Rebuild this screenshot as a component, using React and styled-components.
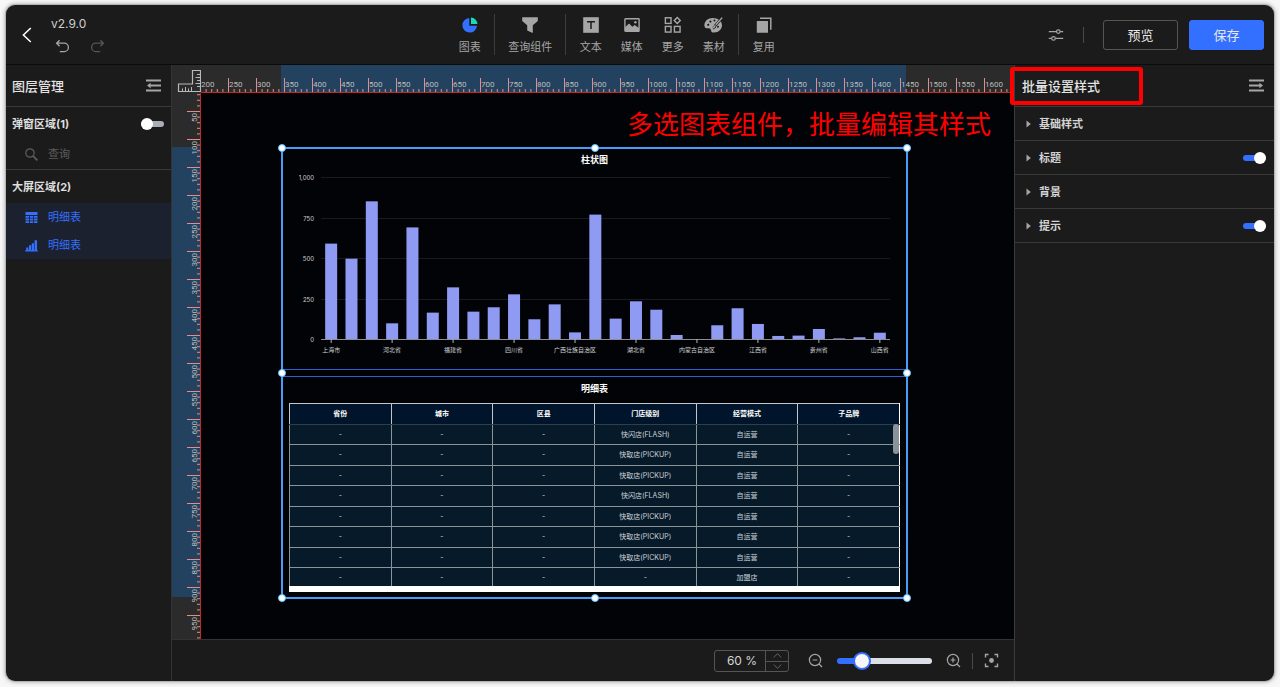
import React from "react";
import styled, { createGlobalStyle, css } from "styled-components";

const GlobalStyle = createGlobalStyle`
  *, *::before, *::after { box-sizing: border-box; }
  body {
    margin: 0;
    background: #f7f7f7;
    font-family: Inter, "Noto Sans CJK SC", sans-serif;
    color: #d6d6d6;
    font-size: 11px;
    line-height: 16px;
  }
  button, input { font: inherit; color: inherit; margin: 0; }
  button { padding: 0; border: 0; background: none; cursor: pointer; }
  h2, h3, p { margin: 0; padding: 0; font-weight: inherit; font-size: inherit; }
  svg { display: block; }
`;

const Page = styled.div`
  min-height: 100vh;
  padding: 5px 6px 6px;
  display: flex;
`;

const Window = styled.div`
  flex: 1;
  min-width: 0;
  display: flex;
  flex-direction: column;
  overflow: hidden;
  border-radius: 9px;
  background: #1b1b1b;
  box-shadow: 0 0 0 1px #b4b4b4, 0 0 4px 1px #a8a8a8;
`;

/* ---------- Header ---------- */

const Header = styled.header`
  height: 60px;
  padding-left: 2px;
  display: grid;
  grid-template-columns: 9fr auto 10fr;
  align-items: center;
  border-bottom: 1px solid #0b0b0b;
`;

const HeaderStart = styled.div`
  display: flex;
  align-items: center;
  gap: 13px;
  padding-left: 11px;
`;

const BackButton = styled.button`
  width: 16px;
  height: 20px;
  display: grid;
  place-items: center;
  color: #fff;
`;

const VersionBlock = styled.div`
  display: flex;
  flex-direction: column;
  gap: 7px;
  padding: 0 3px;
`;

const Version = styled.span`
  font: 12px/16px Inter, sans-serif;
  color: #cfcfcf;
`;

const History = styled.div`
  display: flex;
  gap: 20px;
  padding-left: 4px;
`;

const IconButton = styled.button`
  display: grid;
  place-items: center;
  color: ${(p) => p.$color || "#a6a6a6"};
`;

const Tools = styled.nav`
  display: flex;
  align-items: center;
`;

const ToolGroup = styled.div`
  display: flex;
  padding: 0 4px;
  & + & { border-left: 1px solid #3c3c3c; }
`;

const Tool = styled.button`
  min-width: 41px;
  padding: 3px 9px 0;
  display: flex;
  flex-direction: column;
  align-items: center;
  gap: 6px;
  font-size: 11px;
  line-height: 16px;
  color: #a6a6a6;
  white-space: nowrap;
`;

const HeaderEnd = styled.div`
  display: flex;
  align-items: center;
  justify-content: flex-end;
  padding-right: 10px;
  gap: 11px;
`;

const Divider = styled.span`
  width: 1px;
  height: 16px;
  margin: ${(p) => p.$margin || "0"};
  background: #4a4a4a;
`;

const ActionButton = styled.button`
  width: 75px;
  height: 30px;
  border-radius: 3px;
  font-size: 13px;
  color: #e8e8e8;
  border: 1px solid ${(p) => (p.$primary ? "#3370ff" : "#555")};
  background: ${(p) => (p.$primary ? "#3370ff" : "transparent")};
`;

/* ---------- Body ---------- */

const Body = styled.div`
  flex: 1;
  min-height: 0;
  display: grid;
  grid-template-columns: 166px minmax(0, 1fr) 260px;
`;

const LayerPanel = styled.aside`
  border-right: 1px solid #333;
`;

const StylePanel = styled.aside`
  position: relative;
  border-left: 1px solid #3c3c3c;
`;

const PanelHeader = styled.div`
  height: 42px;
  display: flex;
  align-items: center;
  justify-content: space-between;
  padding: ${(p) => p.$padding};
  border-bottom: 1px solid #3a3a3a;
`;

const PanelTitle = styled.h2`
  font-size: 13px;
  line-height: 20px;
  font-weight: 500;
  color: #e4e4e4;
`;

const LayerSection = styled.section`
  & + & { border-top: 1px solid #3a3a3a; }
  &:first-of-type { padding-bottom: 1px; }
`;

const LayerHeading = styled.div`
  height: 33px;
  display: flex;
  align-items: center;
  justify-content: space-between;
  padding: 0 7px 0 6px;
`;

const LayerTitle = styled.h3`
  font-size: 11px;
  font-weight: 700;
  color: #dedede;
`;

const Layer = styled.button`
  width: 100%;
  height: 28px;
  display: flex;
  align-items: center;
  gap: 10px;
  padding: 0 19px;
  color: ${(p) => (p.$selected ? "#3370ff" : "#5c5c5c")};
  background: ${(p) => (p.$selected ? "#1c2130" : "transparent")};
`;

const Toggle = styled.input.attrs({ type: "checkbox", role: "switch" })`
  appearance: none;
  position: relative;
  width: 23px;
  height: 12px;
  &::before {
    content: "";
    position: absolute;
    inset: 3px 0;
    border-radius: 3px;
    background: #a9adb5;
  }
  &::after {
    content: "";
    position: absolute;
    top: 0;
    left: 0;
    width: 12px;
    height: 12px;
    border-radius: 50%;
    background: #fff;
  }
  &:checked::before { background: #3370ff; }
  &:checked::after { left: 11px; }
`;

const StyleRow = styled.div`
  height: 34px;
  display: flex;
  align-items: center;
  padding: 0 8px 0 11px;
  border-bottom: 1px solid #3a3a3a;
`;

const Expander = styled.button`
  flex: 1;
  display: flex;
  align-items: center;
  gap: 8px;
  text-align: left;
  font-weight: 700;
  color: #d4d4d4;
`;

const TitleMarker = styled.div`
  position: absolute;
  z-index: 3;
  left: -5px;
  top: 2px;
  width: 133px;
  height: 38px;
  border: 4px solid #f00;
  border-radius: 3px;
  pointer-events: none;
`;

/* ---------- Stage ---------- */

const Stage = styled.main`
  display: grid;
  grid-template-columns: 29px minmax(0, 1fr);
  grid-template-rows: 28px minmax(0, 1fr) 42px;
`;

const RulerCorner = styled.div`
  display: flex;
  justify-content: flex-end;
  align-items: flex-end;
  background: #2b2b2b;
`;

const Ruler = styled.div`
  overflow: hidden;
  background: #2b2b2b;
  min-height: 0;
  ${(p) => p.$vertical
    ? css`border-right: 1px solid #c02a2a; contain: size;`
    : css`border-bottom: 1px solid #c02a2a;`}
  text { font: 8px Roboto, sans-serif; fill: #bdbdbd; }
`;

const Canvas = styled.div`
  position: relative;
  overflow: hidden;
  background: #020307;
`;

const Annotation = styled.p`
  position: absolute;
  top: 12px;
  left: 426px;
  font-size: 26px;
  line-height: 40px;
  white-space: nowrap;
  color: #f00;
`;

const Selection = styled.div`
  position: absolute;
  left: 80px;
  top: 54px;
  width: 627px;
  height: 452px;
  border: 2px solid #4b9bf8;
  display: flex;
  flex-direction: column;
  gap: 6px;
`;

const HandleLayer = styled.div`
  position: absolute;
  inset: -1px;
  pointer-events: none;
`;

const Handle = styled.span`
  position: absolute;
  left: ${(p) => p.$x};
  top: ${(p) => p.$y};
  width: 8px;
  height: 8px;
  margin: -4px;
  border: 1px solid #5cc0ff;
  border-radius: 50%;
  background: #fff;
`;

const ChartWidget = styled.section`
  height: 221px;
  border-bottom: 1px solid #2f5fd0;
  svg text { font: 6px Inter, "Noto Sans CJK SC", sans-serif; fill: #d2d2d2; }
`;

const TableWidget = styled.section`
  flex: 1;
  border-top: 1px solid #2f5fd0;
  padding: 0 6px;
`;

const WidgetTitle = styled.h3`
  font-size: 9px;
  line-height: ${(p) => p.$line};
  font-weight: 700;
  text-align: center;
  color: #fff;
`;

const TableFrame = styled.div`
  position: relative;
  margin-top: 2px;
  padding-bottom: 6px;
  background: #fff;
`;

const TableViewport = styled.div`
  height: 183px;
  overflow: hidden;
`;

const DataTable = styled.table`
  width: 100%;
  table-layout: fixed;
  border-collapse: collapse;
  background: #061a2a;
  font-size: 7px;
  line-height: 10px;
  text-align: center;
  color: #ccd3d8;
  th, td { padding: 0; }
  thead tr, tbody tr:nth-child(even) { height: 21px; }
  tbody tr { height: 20px; }
  th {
    font-weight: 700;
    color: #fff;
    background: #00152b;
    border: 1px solid #c4c6ca;
    border-bottom-color: #2e3f4c;
  }
  td { border: 1px solid #8b9599; }
  tr > :last-child { border-right-color: #fff; }
  tbody tr:first-child td { border-top-color: #2e3f4c; }
`;

const ScrollThumb = styled.span`
  position: absolute;
  top: 21px;
  right: 1px;
  width: 6px;
  height: 30px;
  border-radius: 3px;
  background: #8b939a;
`;

/* ---------- Footer ---------- */

const Footer = styled.footer`
  grid-column: 1 / -1;
  display: flex;
  align-items: center;
  justify-content: flex-end;
  padding-right: 15px;
  border-top: 1px solid #333;
`;

const ZoomField = styled.div`
  width: 75px;
  height: 22px;
  display: flex;
  border: 1px solid #555;
  border-radius: 3px;
`;

const ZoomInput = styled.input`
  flex: 1;
  min-width: 0;
  padding: 0 0 0 4px;
  border: 0;
  background: none;
  text-align: center;
  font-size: 12px;
`;

const Stepper = styled.div`
  width: 23px;
  display: grid;
  grid-template-rows: 1fr 1fr;
  border-left: 1px solid #555;
  button { display: grid; place-items: center; color: #666; }
  button + button { border-top: 1px solid #555; }
`;

const ZoomTools = styled.div`
  display: flex;
  align-items: center;
  gap: 14px;
  padding-left: 19px;
`;

const ZoomSlider = styled.input.attrs({ type: "range" })`
  appearance: none;
  width: 95px;
  height: 18px;
  background: transparent;
  &::-webkit-slider-runnable-track {
    height: 6px;
    border-radius: 3px;
    background: linear-gradient(90deg, #3370ff 26%, #dcdfe6 26%);
  }
  &::-webkit-slider-thumb {
    appearance: none;
    width: 18px;
    height: 18px;
    margin-top: -6px;
    border: 2px solid #3370ff;
    border-radius: 50%;
    background: #f7f7f7;
  }
`;

/* ---------- Icons ---------- */

const Icon = ({ size = 16, box = 16, children, ...rest }) => (
  <svg width={size} height={size} viewBox={`0 0 ${box} ${box}`} fill="none" aria-hidden="true" {...rest}>
    {children}
  </svg>
);

const UndoIcon = ({ flip }) => (
  <svg width="15" height="15" viewBox="0 0 15 15" fill="none" stroke="currentColor" strokeWidth="1.3" aria-hidden="true">
    <g transform={flip ? "translate(15 0) scale(-1 1)" : undefined}>
      <path d="M4.6 1.2 1.6 4.2l3 3M1.8 4.2h7.4a4.1 4.1 0 0 1 0 8.4H4.8" />
    </g>
  </svg>
);

const PieIcon = () => (
  <Icon>
    <path d="M7.3 1A7.3 7.3 0 1 0 15 8.7H7.3Z" fill="#3370ff" />
    <path d="M9 .6V7h6.4A6.6 6.6 0 0 0 9 .6Z" fill="#14dcb4" />
  </Icon>
);
const FunnelIcon = () => (
  <Icon><path d="M.2.2h15.600v3.800L10.8 8.200V16L5.2 13.400V8.200L.2 4Z" fill="currentColor" /></Icon>
);
const TextIcon = () => (
  <Icon>
    <rect x=".2" y=".2" width="15.6" height="15.6" fill="currentColor" />
    <path d="M4 4.8h8M8 4.8v7.2" stroke="#1b1b1b" strokeWidth="1.5" />
  </Icon>
);
const MediaIcon = () => (
  <Icon>
    <rect x=".9" y="1.7" width="14.2" height="12.6" rx=".6" stroke="currentColor" strokeWidth="1.4" />
    <path d="M1 10.2 5 6.4l3.4 3.4 2.2-1.8 4.4 3V14H1Z" fill="currentColor" />
    <circle cx="11.4" cy="5.2" r="1.2" fill="currentColor" />
  </Icon>
);
const MoreIcon = () => (
  <Icon size={16} box={17} stroke="currentColor" strokeWidth="1.5" overflow="visible">
    <rect x=".4" y=".8" width="6" height="6" />
    <rect x=".4" y="10" width="6" height="6" />
    <rect x="10" y="10" width="6" height="6" />
    <path d="m13 .6 3.200 3.200L13 7 9.800 3.800Z" />
  </Icon>
);
const PaletteIcon = () => (
  <svg width="19" height="16" viewBox="0 0 19 16" aria-hidden="true">
    <path
      d="M8.8 1C4 1 .4 4.200.4 8.200c0 2.600 1.600 3.200 3.800 3 1.800-.2 2.600.6 2.800 2 .2 1.600 1 2.400 3 2.300 4.800-.2 8-3.300 8-7.300C18 4 14 1 8.800 1Z"
      fill="currentColor"
    />
    <g fill="#1b1b1b">
      <circle cx="4.200" cy="7.800" r="1.100" />
      <circle cx="6.400" cy="4.600" r="1.100" />
      <circle cx="10.400" cy="3.600" r="1" />
      <circle cx="14" cy="9.800" r="1" />
    </g>
    <path d="M18.400.4 11.600 8.200c-.4 1.400-1.200 2.600-2.800 3" stroke="#1b1b1b" strokeWidth="2.600" fill="none" />
    <path d="M18.200.6 11.800 7.800M11.400 8.200c-.6 1.400-1.200 2.400-2.800 2.800" stroke="currentColor" strokeWidth="1.400" fill="none" />
  </svg>
);
const ReuseIcon = () => (
  <Icon>
    <rect x=".8" y="4" width="11.2" height="11.800" rx=".6" fill="currentColor" />
    <path d="M4 1.200h10.800v11.600" stroke="currentColor" strokeWidth="1.500" />
  </Icon>
);

const SettingsIcon = () => (
  <Icon stroke="currentColor" strokeWidth="1.200">
    <path d="M.8 4.600h7.600M12.200 4.600h3M.8 11.400h2.800M7.400 11.400h7.800" />
    <circle cx="10.300" cy="4.600" r="1.800" />
    <circle cx="5.500" cy="11.400" r="1.800" />
  </Icon>
);

const CollapseIcon = ({ flip }) => (
  <svg width="15" height="13" viewBox="0 0 15 13" aria-hidden="true">
    <g transform={flip ? "translate(15 0) scale(-1 1)" : undefined}>
      <path d="M0 1.500h15M4 6.500h11M0 11.500h15" stroke="currentColor" strokeWidth="1.800" />
      <path d="M4.600 3.800v5.400L1 6.500Z" fill="currentColor" />
    </g>
  </svg>
);

const SearchIcon = () => (
  <Icon size={13} box={13} stroke="currentColor">
    <circle cx="5" cy="5" r="4.200" strokeWidth="1.200" />
    <path d="m8.200 8.200 4.200 4.200" strokeWidth="1.800" />
  </Icon>
);
const GridIcon = () => (
  <Icon size={13} box={13} fill="currentColor">
    <path d="M.5 1h12v3H.5ZM.5 5h3.500v1.800H.5Zm4.300 0h3.400v1.800H4.800ZM9 5h3.500v1.800H9ZM.5 7.600H4v1.800H.5Zm4.300 0h3.400v1.800H4.800ZM9 7.600h3.500v1.800H9ZM.5 10.200H4V12H.5Zm4.300 0h3.400V12H4.800ZM9 10.200h3.500V12H9Z" />
  </Icon>
);
const BarsIcon = () => (
  <Icon size={13} box={13} fill="currentColor">
    <path d="M.2 11.200h12.600v1.200H.2ZM1.200 8.400h2.200v3H1.200ZM4 6.200h2.200v5.200H4ZM6.800 4.200H9v7.200H6.800ZM9.600 1.200H12v10.200H9.600Z" />
  </Icon>
);

const MagnifierIcon = ({ plus }) => (
  <Icon size={15} box={15} stroke="currentColor" strokeWidth="1.200">
    <circle cx="7" cy="7" r="5.600" />
    <path d="m11 11 3 3M4.600 7h4.800" />
    {plus && <path d="M7 4.600v4.800" />}
  </Icon>
);

const FitIcon = () => (
  <Icon size={15} box={15} stroke="currentColor" strokeWidth="1.400">
    <path d="M1.500 4.500v-3h3M10.500 1.500h3v3M13.500 10.500v3h-3M4.500 13.500h-3v-3" />
    <circle cx="7.500" cy="7.500" r="2.400" fill="currentColor" stroke="none" />
  </Icon>
);

const CornerRulerIcon = () => (
  <svg width="24" height="24" viewBox="0 0 24 24" fill="none" stroke="#b9b9b9" aria-hidden="true">
    <path d="M1.500 22.500v-7.500h14V1.500h8v21Z" strokeWidth="1.200" />
    <path d="M5.500 19.500v3M8.500 18v4.500M11.500 19.500v3M14.500 18v4.500M20 5.500h3M18.500 8.500H23M20 11.500h3M18.500 14.500H23M20 17.500h3" />
  </svg>
);

const Chevron = ({ down }) => (
  <svg width="9" height="5" viewBox="0 0 9 5" fill="none" stroke="currentColor" aria-hidden="true">
    <path d={down ? "M.8.6 4.500 4.300 8.200.6" : "M.8 4.400 4.500.7l3.700 3.700"} />
  </svg>
);

/* ---------- Rulers ---------- */

const STEP = 28;
const MINOR = [1, 2, 3, 4];

const HorizontalRuler = () => (
  <Ruler>
    <svg width="100%" height="27">
      <rect x="80" width="625" height="27" fill="#224260" />
      {Array.from({ length: 29 }, (_, i) => (
        <g key={i} transform={`translate(${i * STEP - 1} 0)`}>
          <rect y="13" width="1" height="14" fill="#e88a86" />
          {MINOR.map((m) => (
            <rect key={m} x={(m * STEP) / 5} y="24" width="1" height="3" fill="#e88a86" />
          ))}
          <text x="1" y="22">{200 + i * 50}</text>
        </g>
      ))}
    </svg>
  </Ruler>
);

const VerticalRuler = () => (
  <Ruler $vertical>
    <svg width="28" height="100%">
      <rect y="54" width="28" height="450" fill="#224260" />
      {Array.from({ length: 20 }, (_, i) => (
        <g key={i} transform={`translate(0 ${i * STEP - 10})`}>
          <rect x="15" width="13" height="1" fill="#e88a86" />
          {MINOR.map((m) => (
            <rect key={m} x="25" y={(m * STEP) / 5} width="3" height="1" fill="#e88a86" />
          ))}
          {i > 0 && (
            <text transform="translate(25 2) rotate(-90)" textAnchor="end">{i * 50}</text>
          )}
        </g>
      ))}
    </svg>
  </Ruler>
);

/* ---------- Data ---------- */

const toolGroups = [
  [["图表", PieIcon]],
  [["查询组件", FunnelIcon]],
  [["文本", TextIcon], ["媒体", MediaIcon], ["更多", MoreIcon], ["素材", PaletteIcon]],
  [["复用", ReuseIcon]],
];

const values = [
  595, 502, 856, 103, 695, 169, 325, 175, 202, 282, 128, 220, 47, 774,
  132, 239, 187, 31, 3, 91, 196, 99, 25, 27, 68, 10, 17, 45,
];
const provinces = [
  "上海市", "河北省", "福建省", "四川省", "广西壮族自治区",
  "湖北省", "内蒙古自治区", "江西省", "贵州省", "山西省",
];
const gridValues = [1000, 750, 500, 250];

const columns = ["省份", "城市", "区县", "门店级别", "经营模式", "子品牌"];
const FLASH = "快闪店(FLASH)";
const PICKUP = "快取店(PICKUP)";
const stores = [
  [FLASH, "自运营"], [PICKUP, "自运营"], [PICKUP, "自运营"], [FLASH, "自运营"],
  [PICKUP, "自运营"], [PICKUP, "自运营"], [PICKUP, "自运营"], ["-", "加盟店"],
];

const styleRows = [
  { label: "基础样式" },
  { label: "标题", toggle: true },
  { label: "背景" },
  { label: "提示", toggle: true },
];

const handles = [
  ["0%", "0%"], ["50%", "0%"], ["100%", "0%"], ["0%", "50%"],
  ["100%", "50%"], ["0%", "100%"], ["50%", "100%"], ["100%", "100%"],
];

const BASE = 168;
const LEFT = 38;
const PLOT = 569;
const SLOT = PLOT / values.length;
const scale = (v) => (v * 162) / 1000;

const BarChart = () => (
  <svg width="623" height="198" role="img" aria-label="柱状图">
    {gridValues.map((v) => (
      <g key={v}>
        <rect x={LEFT} y={Math.round(BASE - scale(v))} width={PLOT} height="1" fill="#191a1e" />
        <text x="31" y={BASE - scale(v) + 3} textAnchor="end">{v.toLocaleString("en-US")}</text>
      </g>
    ))}
    <text x="31" y={BASE + 3} textAnchor="end">0</text>
    {values.map((v, i) => (
      <rect key={i} x={LEFT + SLOT * (i + 0.5) - 6} y={BASE + 1 - scale(v)} width="12" height={scale(v)} fill="#8f9af3" />
    ))}
    <rect x={LEFT} y={BASE} width={PLOT} height="1" fill="#8d8d90" />
    {provinces.map((name, i) => {
      const x = LEFT + SLOT * (i * 3 + 0.5);
      return (
        <g key={name}>
          <rect x={x - 0.5} y={BASE} width="1" height="4" fill="#b5b5b5" />
          <text x={x} y={BASE + 13} textAnchor="middle">{name}</text>
        </g>
      );
    })}
  </svg>
);

export default function App() {
  return (
    <>
      <GlobalStyle />
      <Page>
        <Window>
          <Header>
            <HeaderStart>
              <BackButton aria-label="返回">
                <svg width="10" height="16" viewBox="0 0 10 16" fill="none" stroke="currentColor" strokeWidth="1.500" aria-hidden="true">
                  <path d="M8.800 1 1.400 8l7.400 7" />
                </svg>
              </BackButton>
              <VersionBlock>
                <Version>v2.9.0</Version>
                <History>
                  <IconButton aria-label="撤销"><UndoIcon /></IconButton>
                  <IconButton aria-label="重做" $color="#555"><UndoIcon flip /></IconButton>
                </History>
              </VersionBlock>
            </HeaderStart>
            <Tools>
              {toolGroups.map((group, i) => (
                <ToolGroup key={i}>
                  {group.map(([label, Glyph]) => (
                    <Tool key={label}><Glyph />{label}</Tool>
                  ))}
                </ToolGroup>
              ))}
            </Tools>
            <HeaderEnd>
              <IconButton aria-label="设置"><SettingsIcon /></IconButton>
              <Divider $margin="0 8px" />
              <ActionButton>预览</ActionButton>
              <ActionButton $primary>保存</ActionButton>
            </HeaderEnd>
          </Header>

          <Body>
            <LayerPanel>
              <PanelHeader $padding="0 10px 0 6px">
                <PanelTitle>图层管理</PanelTitle>
                <IconButton aria-label="收起图层"><CollapseIcon /></IconButton>
              </PanelHeader>
              <LayerSection>
                <LayerHeading>
                  <LayerTitle as="label" htmlFor="popup-area">弹窗区域(1)</LayerTitle>
                  <Toggle id="popup-area" />
                </LayerHeading>
                <Layer><SearchIcon />查询</Layer>
              </LayerSection>
              <LayerSection>
                <LayerHeading><LayerTitle>大屏区域(2)</LayerTitle></LayerHeading>
                <Layer $selected><GridIcon />明细表</Layer>
                <Layer $selected><BarsIcon />明细表</Layer>
              </LayerSection>
            </LayerPanel>

            <Stage>
              <RulerCorner><CornerRulerIcon /></RulerCorner>
              <HorizontalRuler />
              <VerticalRuler />
              <Canvas>
                <Annotation>多选图表组件，批量编辑其样式</Annotation>
                <Selection>
                  <ChartWidget>
                    <WidgetTitle $line="22px">柱状图</WidgetTitle>
                    <BarChart />
                  </ChartWidget>
                  <TableWidget>
                    <WidgetTitle $line="24px">明细表</WidgetTitle>
                    <TableFrame>
                      <TableViewport>
                        <DataTable>
                          <thead>
                            <tr>{columns.map((c) => <th key={c} scope="col">{c}</th>)}</tr>
                          </thead>
                          <tbody>
                            {stores.map(([level, mode], i) => (
                              <tr key={i}>
                                <td>-</td><td>-</td><td>-</td>
                                <td>{level}</td><td>{mode}</td><td>-</td>
                              </tr>
                            ))}
                          </tbody>
                        </DataTable>
                      </TableViewport>
                      <ScrollThumb />
                    </TableFrame>
                  </TableWidget>
                  <HandleLayer>
                    {handles.map(([x, y]) => <Handle key={x + y} $x={x} $y={y} />)}
                  </HandleLayer>
                </Selection>
              </Canvas>
              <Footer>
                <ZoomField>
                  <ZoomInput aria-label="缩放比例" defaultValue="60 %" />
                  <Stepper>
                    <button aria-label="增加"><Chevron /></button>
                    <button aria-label="减少"><Chevron down /></button>
                  </Stepper>
                </ZoomField>
                <ZoomTools>
                  <IconButton aria-label="缩小"><MagnifierIcon /></IconButton>
                  <ZoomSlider aria-label="缩放" min="0" max="100" defaultValue="21" />
                  <IconButton aria-label="放大"><MagnifierIcon plus /></IconButton>
                  <Divider $margin="0 -3px" />
                  <IconButton aria-label="适应画布"><FitIcon /></IconButton>
                </ZoomTools>
              </Footer>
            </Stage>

            <StylePanel>
              <PanelHeader $padding="0 10px 0 7px">
                <PanelTitle>批量设置样式</PanelTitle>
                <IconButton aria-label="收起样式"><CollapseIcon flip /></IconButton>
              </PanelHeader>
              {styleRows.map(({ label, toggle }) => (
                <StyleRow key={label}>
                  <Expander aria-expanded="false">
                    <svg width="5" height="8" viewBox="0 0 5 8" aria-hidden="true">
                      <path d="M.5.5 4.800 4 .5 7.500Z" fill="#a6a6a6" />
                    </svg>
                    {label}
                  </Expander>
                  {toggle && <Toggle aria-label={label} defaultChecked />}
                </StyleRow>
              ))}
              <TitleMarker />
            </StylePanel>
          </Body>
        </Window>
      </Page>
    </>
  );
}
